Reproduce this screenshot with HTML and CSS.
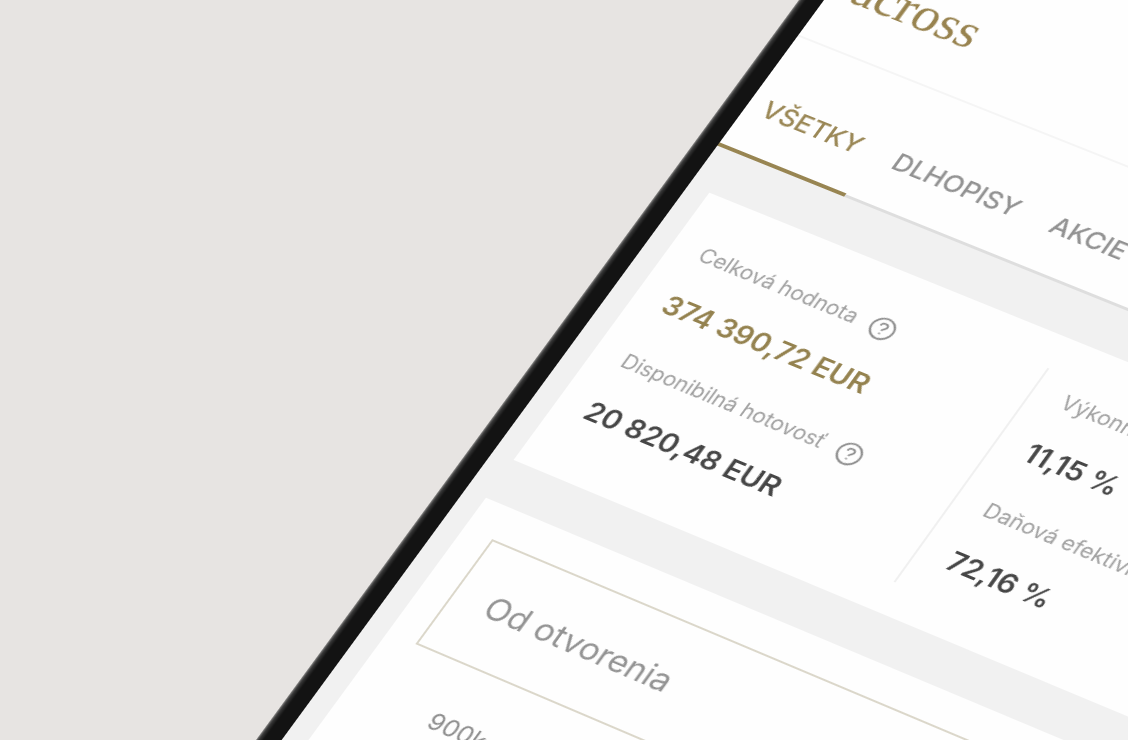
FILE: index.html
```html
<!DOCTYPE html>
<html lang="sk">
<head>
<meta charset="utf-8">
<meta name="viewport" content="width=device-width, initial-scale=1">
<title>Across – Portfólio</title>
<link rel="stylesheet" href="styles.css">
</head>
<body>
<div class="scene">
  <div class="phone">
    <div class="screen">
      <header class="header"><span class="logo">across</span></header>
      <nav class="tabs" aria-label="Typ investície">
        <button class="tab tab--active" type="button">VŠETKY</button>
        <button class="tab" type="button">DLHOPISY</button>
        <button class="tab" type="button">AKCIE</button>
      </nav>
      <main class="content">
        <section class="card summary">
          <div class="column">
            <div class="stat">
              <div class="label">Celková hodnota
                <button class="help" type="button" aria-label="Pomocník: celková hodnota">
                  <svg viewBox="0 0 26 26"><circle cx="13" cy="13" r="11.8"/><path d="M9.4 10.4C9.4 8.2 11 6.9 13.1 6.9C15.200 6.900 16.700 8.200 16.700 10C16.700 12.600 13 12.700 13 15.400"/><path d="M13 18V19.600"/></svg>
                </button>
              </div>
              <div class="value value--gold">374 390,72 EUR</div>
            </div>
            <div class="stat">
              <div class="label">Disponibilná hotovosť
                <button class="help" type="button" aria-label="Pomocník: disponibilná hotovosť">
                  <svg viewBox="0 0 26 26"><circle cx="13" cy="13" r="11.8"/><path d="M9.4 10.4C9.4 8.2 11 6.9 13.1 6.9C15.200 6.900 16.700 8.200 16.700 10C16.700 12.600 13 12.700 13 15.400"/><path d="M13 18V19.600"/></svg>
                </button>
              </div>
              <div class="value">20 820,48 EUR</div>
            </div>
          </div>
          <div class="column column--divided">
            <div class="stat">
              <div class="label">Výkonnosť</div>
              <div class="value">11,15 %</div>
            </div>
            <div class="stat">
              <div class="label">Daňová efektivita</div>
              <div class="value">72,16 %</div>
            </div>
          </div>
        </section>
        <section class="card history">
          <select class="period" aria-label="Obdobie">
            <option>Od otvorenia</option>
          </select>
          <div class="axis">900k</div>
        </section>
      </main>
    </div>
  </div>
</div>
</body>
</html>
```
FILE: styles.css
```css
* {
  box-sizing: border-box;
}

body {
  margin: 0;
  background: #e7e4e2;
  font-family: Inter, "Liberation Sans", sans-serif;
}

button,
select {
  margin: 0;
  border: 0;
  background: none;
  font: inherit;
  color: inherit;
}

.scene {
  height: 100vh;
  overflow: hidden;
}

/* The device lies on the table, seen at an angle */
.phone {
  width: 829px;
  padding-left: 21px;
  background: linear-gradient(90deg, #8a8988, #3a3a3a 2px, #131313 6px);
  outline: 1px solid transparent;
  transform-origin: 0 0;
  transform: matrix3d(0.9031, 0.3689, 0, -0.00003398, -0.6066, 0.8035, 0, -0.00002141, 0, 0, 1, 0, 718.5, 144, 0, 1) translate(-21px, -360px);
}

.screen {
  background: #f1f1f1;
}

.header {
  padding: 128px 20px 40px;
  background: #fefefe;
}

.logo {
  display: block;
  font-family: "Liberation Serif", serif;
  font-size: 52px;
  line-height: 56px;
  color: #98834f;
}

.tabs {
  display: flex;
  gap: 4px;
  padding-top: 66px;
  background: #fefefe;
  border-top: 2px solid #f5f5f5;
  border-bottom: 3px solid #dedede;
}

.tab {
  margin-bottom: -3px;
  padding: 0 16px 34px;
  border-bottom: 4px solid transparent;
  font-size: 26px;
  font-weight: 500;
  line-height: 32px;
  color: #929292;
}

.tab--active {
  border-color: #988552;
  color: #9a8755;
}

.content {
  display: grid;
  gap: 46px;
  padding: 48px 22px;
}

.card {
  background: #fefefe;
}

.summary {
  display: grid;
  grid-template-columns: 1fr 1fr;
  padding: 36px 0 34px;
}

.column {
  display: grid;
  gap: 38px;
  padding: 12px 0 24px 30px;
}

.column--divided {
  border-left: 2px solid #f0f0f0;
}

.stat {
  display: grid;
  gap: 28px;
}

.label {
  display: flex;
  align-items: center;
  gap: 15px;
  font-size: 21px;
  line-height: 28px;
  color: #a0a0a0;
}

.help {
  display: grid;
  padding: 0;
  color: #8c8c8c;
}

.help svg {
  width: 25px;
  height: 25px;
  fill: none;
  stroke: currentColor;
  stroke-width: 2;
}

.value {
  font-size: 28px;
  font-weight: 600;
  line-height: 36px;
  color: #464646;
}

.value--gold {
  color: #94824f;
}

.history {
  min-height: 420px;
  padding: 36px 30px;
}

.period {
  display: block;
  appearance: none;
  width: 100%;
  height: 127px;
  padding: 0 34px;
  border: 2px solid #dbd7ca;
  border-radius: 0;
  font-size: 32px;
  color: #939393;
}

.axis {
  padding: 48px 57px;
  font-size: 24px;
  line-height: 32px;
  color: #8c8c8c;
}
```
